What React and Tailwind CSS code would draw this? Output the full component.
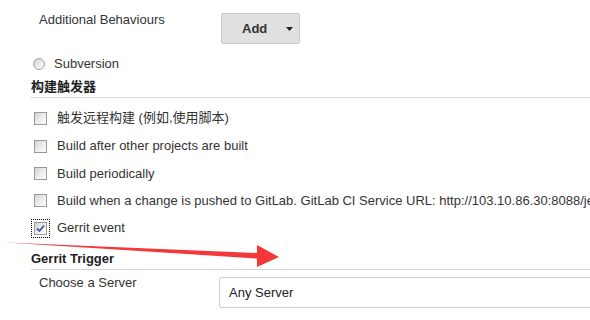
import React from "react";

const Checkbox = ({ checked = false, focused = false }) => (
  <span
    className={
      "inline-flex items-center justify-center w-[13px] h-[13px] border border-[#9a9a9a] bg-linear-to-br from-[#d4d4d4] via-[#ececec] to-white shrink-0" +
      (focused ? " outline-1 outline-dotted outline-black outline-offset-[2px]" : "")
    }
  >
    {checked && (
      <svg width="9" height="9" viewBox="0 0 9 9">
        <path d="M1 4.5 L3.5 7 L8 1.5" fill="none" stroke="#3d58a8" strokeWidth="1.8" />
      </svg>
    )}
  </span>
);

const Radio = () => (
  <span className="inline-block w-[12px] h-[12px] rounded-full border border-[#a5a5a5] bg-linear-to-br from-[#cfcfcf] via-[#e8e8e8] to-white shrink-0" />
);

const SectionHeader = ({ children }) => (
  <div className="ml-[31px] pb-[2px] border-b border-[#d8d8d8] font-bold leading-[16px] text-[#222]">
    {children}
  </div>
);

const CheckRow = ({ label, checked, focused, height }) => (
  <div className={"flex items-center ml-[34px] gap-[10px] whitespace-nowrap " + height}>
    <Checkbox checked={checked} focused={focused} />
    <span className="leading-[16px]">{label}</span>
  </div>
);

const App = () => {
  // trigger checkbox rows
  const triggers = [
    { label: "触发远程构建 (例如,使用脚本)", height: "h-[28px]" },
    { label: "Build after other projects are built", height: "h-[28px]" },
    { label: "Build periodically", height: "h-[27px]" },
    {
      label: "Build when a change is pushed to GitLab. GitLab CI Service URL: http://103.10.86.30:8088/jenkins/project/gerrit-test",
      height: "h-[27px]",
    },
    { label: "Gerrit event", height: "h-[28px]", checked: true, focused: true },
  ];

  return (
    <div
      className="relative w-[590px] h-[320px] overflow-hidden bg-white text-[13px] text-[#333]"
      style={{ fontFamily: '"Liberation Sans", Arial, "Noto Sans CJK SC", sans-serif' }}
    >
      {/* Additional Behaviours */}
      <div className="flex items-start pt-[12px]">
        <div className="w-[221px] pl-[39px] leading-[16px]">Additional Behaviours</div>
        <button className="mt-[1px] h-[31px] w-[79px] flex items-center pl-[20px] bg-[#e0e0e0] border border-[#c9c9c9] rounded-[2px] font-bold text-[#333]">
          Add
          <svg className="ml-[19px]" width="7" height="4" viewBox="0 0 7 4">
            <path d="M0 0 L7 0 L3.5 4 Z" fill="#222" />
          </svg>
        </button>
      </div>

      {/* Subversion */}
      <div className="flex items-center mt-[12px] ml-[33px] gap-[9px] h-[16px]">
        <Radio />
        <span className="leading-[16px]">Subversion</span>
      </div>

      <div className="mt-[7px]">
        <SectionHeader>构建触发器</SectionHeader>
      </div>

      <div className="mt-[6px] flex flex-col">
        {triggers.map((t) => (
          <CheckRow key={t.label} {...t} />
        ))}
      </div>

      <div className="mt-[9px]">
        <SectionHeader>Gerrit Trigger</SectionHeader>
      </div>

      {/* Choose a Server */}
      <div className="flex items-start pt-[5px]">
        <div className="w-[219px] shrink-0 pl-[39px] leading-[16px]">Choose a Server</div>
        <div className="mt-[2px] h-[31px] w-[420px] shrink-0 flex items-center pl-[9px] border border-[#cfcfcf] rounded-[2px] text-[#222]">
          Any Server
        </div>
      </div>

      {/* red annotation arrow */}
      <svg className="absolute left-0 top-0 pointer-events-none" width="590" height="320" viewBox="0 0 590 320">
        <polygon
          points="6,242.5 257,253 257,245 279,257 257,267 257,258.5"
          fill="#f2383a"
        />
      </svg>
    </div>
  );
};

export default App;
